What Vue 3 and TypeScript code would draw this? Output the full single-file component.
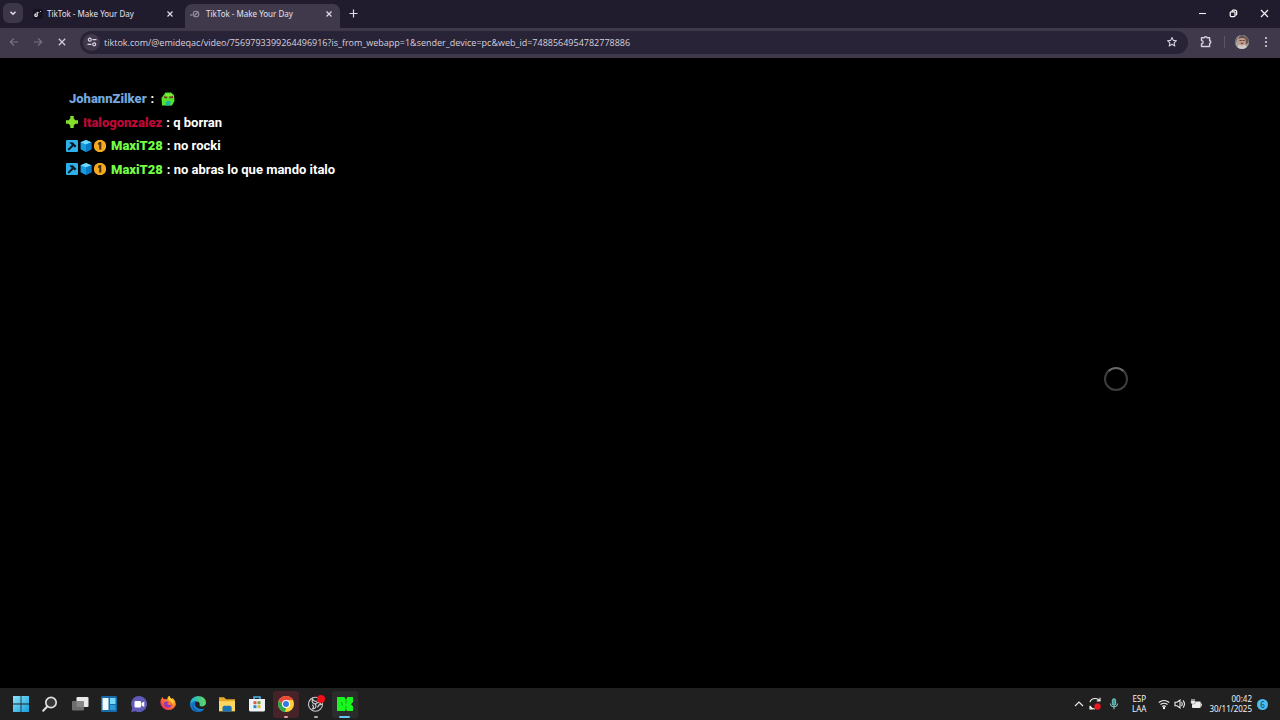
<script setup lang="ts">
import { ref } from 'vue'

interface Message {
  id: number
  user: string
  color: string
  badges: string[]
  text: string
}

const address = ref(
  'tiktok.com/@emideqac/video/7569793399264496916?is_from_webapp=1&sender_device=pc&web_id=7488564954782778886'
)

const tabs = [
  { id: 1, title: 'TikTok - Make Your Day', active: false },
  { id: 2, title: 'TikTok - Make Your Day', active: true }
]

const messages: Message[] = [
  { id: 1, user: 'JohannZilker', color: '#72a6dc', badges: [], text: '' },
  { id: 2, user: 'Italogonzalez', color: '#bc0838', badges: ['plus'], text: 'q borran' },
  { id: 3, user: 'MaxiT28', color: '#75fd46', badges: ['hammer', 'cube', 'coin'], text: 'no rocki' },
  { id: 4, user: 'MaxiT28', color: '#75fd46', badges: ['hammer', 'cube', 'coin'], text: 'no abras lo que mando italo' }
]
</script>

<template>
  <div class="screen">
    <header class="tabstrip">
      <button class="tab-search" aria-label="Search tabs">
        <svg width="8" height="8" viewBox="0 0 8 8"><path d="M1.5 2.8 4 5.2 6.5 2.8" fill="none" stroke="#e4dfec" stroke-width="1.5" /></svg>
      </button>
      <nav class="tabs">
        <div v-for="tab in tabs" :key="tab.id" class="tab" :class="{ active: tab.active }">
          <svg v-if="!tab.active" class="favicon" viewBox="0 0 10 10">
            <rect width="10" height="10" rx="2" fill="#16121f" />
            <path d="M4.2 3v3.2a1.2 1.2 0 1 1-1.2-1.2" fill="none" stroke="#e8e6ee" stroke-width="1.3" />
            <path d="M4.3 3.2q1 .6 1.8.3M7 2.5h1" fill="none" stroke="#b9b0cb" stroke-width="1" />
          </svg>
          <svg v-else class="favicon" viewBox="0 0 10 10">
            <circle cx="6" cy="5" r="2.8" fill="none" stroke="#96909f" stroke-width="1.1" />
            <path d="M0 6h2.4M4.6 6.4l3-3" fill="none" stroke="#aaa4b2" stroke-width="1.1" />
          </svg>
          <a href="#" class="tab-title">{{ tab.title }}</a>
          <button class="tab-close" aria-label="Close tab">
            <svg width="8" height="8" viewBox="0 0 8 8"><path d="m1.5 1.5 5 5m0-5-5 5" stroke="#e1dce8" stroke-width="1.2" /></svg>
          </button>
        </div>
      </nav>
      <button class="new-tab" aria-label="New tab">
        <svg width="9" height="9" viewBox="0 0 9 9"><path d="M4.5.5v8m-4-4h8" stroke="#e1dce8" stroke-width="1.2" /></svg>
      </button>
      <div class="window-controls">
        <button aria-label="Minimize"><svg width="9" height="9" viewBox="0 0 9 9"><path d="M1 4.5h7" stroke="#eee" stroke-width="1.1" /></svg></button>
        <button aria-label="Restore">
          <svg width="9" height="9" viewBox="0 0 9 9" fill="none" stroke="#fff" stroke-width="1.2"><rect x="1.2" y="2.8" width="4.8" height="4.8" rx="1" /><path d="M3 2.5Q3 1.2 4.2 1.2h1.6q1.9 0 1.9 1.9v1.8q0 1.1-1.3 1.1" /></svg>
        </button>
        <button aria-label="Close"><svg width="9" height="9" viewBox="0 0 9 9"><path d="m1 1 7 7m0-7L1 8" stroke="#f2f0f5" stroke-width="1.2" /></svg></button>
      </div>
    </header>

    <div class="toolbar">
      <div class="nav">
        <button aria-label="Back"><svg width="10" height="10" viewBox="0 0 10 10"><path d="M9 5H1.5M5 1.3 1.3 5 5 8.7" fill="none" stroke="#79718a" stroke-width="1.2" /></svg></button>
        <button aria-label="Forward"><svg width="10" height="10" viewBox="0 0 10 10"><path d="M1 5h7.5M5 1.3 8.7 5 5 8.7" fill="none" stroke="#79718a" stroke-width="1.2" /></svg></button>
        <button aria-label="Stop loading"><svg width="10" height="10" viewBox="0 0 10 10"><path d="m1.8 1.8 6.4 6.4m0-6.4L1.8 8.2" stroke="#d0cad9" stroke-width="1.3" /></svg></button>
      </div>
      <div class="omnibox">
        <button class="site-info" aria-label="View site information">
          <svg width="10" height="10" viewBox="0 0 10 10" fill="none" stroke="#dcd6e6" stroke-width="1.2"><path d="M5.5 2.7h4M.5 7.3h4" /><circle cx="2.8" cy="2.7" r="1.5" /><circle cx="7.2" cy="7.3" r="1.5" /></svg>
        </button>
        <input v-model="address" class="address" type="text" aria-label="Address" spellcheck="false" />
        <button class="star" aria-label="Bookmark this tab">
          <svg width="12" height="12" viewBox="0 0 12 12"><path d="m6 1.5 1.3 2.9 3.2.3-2.4 2.1.7 3.2L6 8.3 3.2 10l.7-3.2-2.4-2.1 3.2-.3z" fill="none" stroke="#d5cfde" stroke-width="1.1" stroke-linejoin="round" /></svg>
        </button>
      </div>
      <div class="tools">
        <button aria-label="Extensions">
          <svg width="12" height="12" viewBox="0 0 12 12"><path d="M1.5 1.8h2.7a1.4 1 0 0 1 2.8 0h2.6v2.9a1.2 1.4 0 0 1 0 2.8v3H1.5V7.8a1.6 1.6 0 0 0 0-3.2z" fill="none" stroke="#d5cfde" stroke-width="1.4" stroke-linejoin="round" /></svg>
        </button>
        <span class="divider"></span>
        <button aria-label="Profile">
          <svg width="16" height="16" viewBox="0 0 16 16">
            <circle cx="8" cy="8" r="7" fill="#aaa39f" />
            <path d="M1.6 10.5Q2 6 4.5 2.5L3 4Q1 6 1.6 10.5M11 2q3.5 2 3.8 6L12 11z" fill="#655354" />
            <path d="M3 13q2-3 5-3t5 3q-2 2-5 2t-5-2" fill="#d2c9c7" />
            <ellipse cx="8" cy="7" rx="3.3" ry="4.6" fill="#c69c86" />
            <path d="M4.5 5Q5 1.3 8 1.3T11.5 5Q8 3 4.5 5" fill="#60504e" />
            <path d="M5.5 6.5h2m1 0h2M6.8 9.3h2.5" stroke="#51363a" />
          </svg>
        </button>
        <button aria-label="Menu"><svg width="4" height="12" viewBox="0 0 4 12" fill="#d5cfde"><circle cx="2" cy="2" r="1.1" /><circle cx="2" cy="6" r="1.1" /><circle cx="2" cy="10" r="1.1" /></svg></button>
      </div>
    </div>

    <main class="page">
      <ul class="chat">
        <li v-for="message in messages" :key="message.id">
          <span v-if="message.badges.length" class="badges">
            <template v-for="badge in message.badges" :key="badge">
              <svg v-if="badge === 'plus'" viewBox="0 0 12 12"><path d="M4.3 0h3.4v2.6l1.7 1.7H12v3.4H9.4L7.7 9.4V12H4.3V9.4L2.6 7.7H0V4.3h2.6l1.7-1.7z" fill="#83df27" /></svg>
              <svg v-else-if="badge === 'hammer'" viewBox="0 0 12 12"><rect width="12" height="12" rx="1" fill="#2eb0ea" /><path d="m3.2 2.4 3.5-.2 3.8 3.9-1.7 1.5-1.3-1.4L3 10.5 1.6 9.2 5.8 4.9z" fill="#061b28" /></svg>
              <svg v-else-if="badge === 'cube'" viewBox="0 0 12 12"><path d="m6 0 5.4 2.2v7L6 12 .6 9.2v-7z" fill="#159be4" /><path d="M.6 2.2 6 0l5.4 2.2L6 4.6z" fill="#6bdcff" /><path d="M6 4.6 11.4 2.2v7L6 12z" fill="#087ac1" /></svg>
              <svg v-else viewBox="0 0 12 12"><path d="M4 0h4l3 2 1 2.5v3L11 10l-3 2H4l-3-2-1-2.5v-3L1 2z" fill="#f4aa20" /><path d="M4 3.3 5.3 2h2v7.5H5.2V4.8H4z" fill="#50300a" /></svg>
            </template>
          </span>
          <b class="user" :class="{ plain: !message.badges.length }" :style="{ color: message.color }">{{ message.user }}</b>
          <span class="body">: {{ message.text }}</span>
          <svg v-if="!message.text" class="emote" viewBox="0 0 14 14">
            <path d="M4.5.5H10L13 3l.5 6-2.5 4.5H1L.5 6z" fill="#54e52b" />
            <path d="M3 4.2 6.5 4.8 6 6.5 3 6M8 4.8l4-.8V6L8.5 6.5z" fill="#873824" />
            <path d="M5 9.8q3-2 5 0l-1 3.7H4z" fill="#22b59c" />
            <path d="M5 3h6" stroke="#b6ef4c" />
          </svg>
        </li>
      </ul>
      <div class="spinner" role="status" aria-label="Loading"></div>
    </main>

    <footer class="taskbar">
      <nav class="apps">
        <button aria-label="Start">
          <svg viewBox="0 0 18 18"><defs><linearGradient id="win" x2="1" y2="1"><stop stop-color="#8be5fc" /><stop offset="1" stop-color="#159ddb" /></linearGradient></defs><path d="M1 1h7.6v7.6H1zM9.4 1H17v7.6H9.4zM1 9.4h7.6V17H1zM9.4 9.4H17V17H9.4z" fill="url(#win)" /></svg>
        </button>
        <button aria-label="Search">
          <svg viewBox="0 0 18 18"><circle cx="10" cy="7.5" r="5.2" fill="#343638" stroke="#dedede" stroke-width="1.7" /><path d="m6.2 11.5-4 4.3" stroke="#dedede" stroke-width="2" stroke-linecap="round" /></svg>
        </button>
        <button aria-label="Task view">
          <svg viewBox="0 0 18 18"><rect x="5.5" y="2" width="12" height="10" rx="1" fill="#e8e8e8" /><rect x="1" y="6" width="12" height="9.5" rx="1" fill="#777" fill-opacity=".88" /></svg>
        </button>
        <button aria-label="Widgets">
          <svg viewBox="0 0 18 18"><rect x="1" y="1" width="16" height="16" rx="1.5" fill="#166ca9" /><rect x="2.5" y="3" width="6" height="12" fill="#f1faff" /><rect x="10" y="3" width="5.5" height="6" fill="#77d8fb" /><rect x="10" y="10" width="5.5" height="5" fill="#2f9bd6" /></svg>
        </button>
        <button aria-label="Chat">
          <svg viewBox="0 0 18 18"><path d="M9 1a8 8 0 1 1-3.4 15.2L1.2 17l1-4A8 8 0 0 1 9 1" fill="#625ab8" /><rect x="4.5" y="6" width="6.5" height="6.5" rx="1" fill="#fff" /><path d="m11.5 8 2.8-1.6v5.7l-2.8-1.6z" fill="#fff" /></svg>
        </button>
        <button aria-label="Firefox">
          <svg viewBox="0 0 18 18"><defs><linearGradient id="fox" x1="1" x2=".1" y2="1"><stop stop-color="#ffe13b" /><stop offset=".45" stop-color="#ff802b" /><stop offset="1" stop-color="#ed1d67" /></linearGradient></defs><path d="M2 4.2 3.5 2l1.4 2.2q2-.5 3.2.2Q8.2 2 10.2.8q.6 2.1 2.5 3.3L13.8 3q3.3 3.2 3 7A7.9 7.9 0 1 1 2 4.2" fill="url(#fox)" /><path d="M5 8q.6-2 3-1.5l1.8 1-1.7 1.3q1 2 4.7.6-1 3.5-4.3 3.2T5 8" fill="#8e39ba" /><path d="M10.2.8q.6 2.1 2.5 3.3 2.5 2.2 1.4 5.7-.6-3-3-4Q8 4.5 10.2.8" fill="#ffd53c" /></svg>
        </button>
        <button aria-label="Edge">
          <svg viewBox="0 0 18 18"><defs><linearGradient id="edge" x2="1"><stop stop-color="#16b4df" /><stop offset="1" stop-color="#67d65c" /></linearGradient></defs><path d="M1 9.5A8 8 0 0 1 9 1q7.5.2 8 6.6-.1 3.8-4 3.8-3.1 0-2.3-1.9.2-3-3.2-3-4.1-.1-6.5 3" fill="url(#edge)" /><path d="M1 9.5q2.6-4 6.3-3.7-2.6 3.2 0 6.2 3 3 8.3 1.5-2.7 4-7.3 3.5Q1.3 16 1 9.5" fill="#147dce" /><path d="M6.6 7Q3 10 5.5 13.5q3 3.2 7 3-9 2-9-5.5 0-3 3.1-4" fill="#155ca6" /></svg>
        </button>
        <button aria-label="File Explorer">
          <svg viewBox="0 0 18 18"><path d="M1 2.3h5l2 2h9v12H1z" fill="#e5aa28" /><path d="M1 6.2h16v10H1z" fill="#ffd760" /><path d="M4.5 16.5V12l1.5-1.3h6.2l1.5 1.3v4.5z" fill="#1674b7" /></svg>
        </button>
        <button aria-label="Microsoft Store">
          <svg viewBox="0 0 18 18"><path d="M6 4V2h6v2" fill="none" stroke="#50b5e7" stroke-width="1.5" /><path d="M1 4h16v11q0 1.5-1.5 1.5h-13Q1 16.5 1 15z" fill="#f0f3f5" /><path d="M5.5 6.2h3v3h-3z" fill="#dd5a45" /><path d="M9.5 6.2h3v3h-3z" fill="#68a838" /><path d="M5.5 10.2h3v3h-3z" fill="#248dc6" /><path d="M9.5 10.2h3v3h-3z" fill="#e5b52d" /></svg>
        </button>
        <button class="running alert" aria-label="Chrome">
          <svg viewBox="0 0 18 18"><circle cx="9" cy="9" r="8" fill="#ffd139" /><path d="M2.1 5A8 8 0 0 1 16 5H9v4L5.6 11z" fill="#eb493b" /><path d="M2.1 5 5.6 11 9 13l-1 4A8 8 0 0 1 2.1 5" fill="#29a853" /><circle cx="9" cy="9" r="4" fill="#fff" /><circle cx="9" cy="9" r="3" fill="#3479e4" /></svg>
        </button>
        <button class="running" aria-label="OBS Studio">
          <svg viewBox="0 0 18 18"><circle cx="8.5" cy="9.2" r="7" fill="#202124" stroke="#c9c9c9" stroke-width="1.1" /><path d="M8.5 9.2Q4 8.5 5.5 4q1 3 4.3 2.3M8.5 9.2q2.8-3.7 5.7.2-3-.2-3.5 3.1M8.5 9.2q1.8 4.2-3 4.7 2.2-2.2-.3-4.1" fill="none" stroke="#c9c9c9" stroke-width="1.2" /><circle cx="14" cy="4" r="4" fill="#ef1018" /></svg>
        </button>
        <button class="running current" aria-label="Kick">
          <svg viewBox="0 0 18 18"><path d="M1 2h7.5l1.5 3 1.3-3H17v5l-2 2.2 2 2V16h-6l-1.5-2.5V16H1z" fill="#19f51e" /><path d="m5.5 7 1 3.5M10 5v3.5m0 2.5v2.5" stroke="#0b8f10" stroke-width=".8" /></svg>
        </button>
      </nav>
      <div class="tray">
        <button aria-label="Show hidden icons"><svg width="10" height="10" viewBox="0 0 10 10"><path d="m1 7 4-4 4 4" fill="none" stroke="#eee" stroke-width="1.1" /></svg></button>
        <button aria-label="Updates"><svg width="14" height="14" viewBox="0 0 14 14"><path d="M2 5q1.2-3.5 5-3.5 3.2 0 4.5 2M12 .8v3H8.8M2 8.8v3h3M2 9q1.5 3 5 3" fill="none" stroke="#eee" stroke-width="1.2" /><circle cx="9.5" cy="9.5" r="3.2" fill="#ef1721" /></svg></button>
        <button aria-label="Microphone"><svg width="10" height="12" viewBox="0 0 10 12"><rect x="3.3" y=".7" width="3.4" height="6.6" rx="1.7" fill="#3f9e9c" stroke="#8ed5d0" stroke-width=".8" /><path d="M1.3 5.5q0 3.3 3.7 3.3t3.7-3.3M5 8.8v2.5" fill="none" stroke="#8ed5d0" /></svg></button>
        <button class="language">ESP<br />LAA</button>
        <button class="status" aria-label="Network, sound and battery">
          <svg width="12" height="12" viewBox="0 0 12 12" fill="none" stroke="#eee" stroke-width="1.2"><path d="M.8 4.5q5.2-4 10.4 0M2.5 6.6q3.5-2.7 7 0M4.2 8.5q1.8-1.4 3.6 0" /><circle cx="6" cy="10" r=".6" fill="#eee" /></svg>
          <svg width="12" height="12" viewBox="0 0 12 12" fill="none" stroke="#eee" stroke-width="1.1"><path d="M1 4.3h2L6 2v8L3 7.7H1zM7.5 4q1.5 2 0 4M9 2.3q3 3.7 0 7.4" /></svg>
          <svg width="12" height="12" viewBox="0 0 12 12"><rect x="2" y="3.5" width="8.7" height="6.5" rx="1" fill="#eee" /><path d="M11.3 5.5v2.7M2 1v2m2-2v2" stroke="#eee" stroke-width="1.1" /><path d="M.8 2.5h4.4v2.7q-2.2 2.2-4.4 0z" fill="#eee" stroke="#202020" stroke-width=".3" /></svg>
        </button>
        <button class="clock">00:42<br />30/11/2025</button>
        <button class="notifications" aria-label="6 notifications">6</button>
      </div>
    </footer>
  </div>
</template>

<style>
body {
  background: #000;
}
</style>

<style scoped>
* {
  box-sizing: border-box;
}

.screen {
  min-height: 100vh;
  display: flex;
  flex-direction: column;
  background: #000;
  font-family: "Noto Sans", sans-serif;
  font-size: 8px;
}

button {
  display: flex;
  align-items: center;
  justify-content: center;
  padding: 0;
  border: 0;
  background: none;
  color: inherit;
  font: inherit;
}

.tabstrip {
  display: flex;
  align-items: center;
  height: 28px;
  padding: 0 0 2px 3px;
  background: #211c2d;
}

.tab-search {
  width: 20px;
  height: 20px;
  border-radius: 6px;
  background: #3c3648;
}

.tabs {
  display: flex;
  align-self: flex-end;
  margin: 0 0 -2px 3px;
}

.tab {
  display: flex;
  align-items: center;
  width: 155px;
  height: 24px;
  padding: 0 6px 5px 5px;
  color: #e6e2ec;
}

.tab:first-child {
  width: 159px;
  padding-left: 7px;
  padding-right: 10px;
}

.tab.active {
  border-radius: 7px 7px 0 0;
  background: #3f394b;
}

.favicon {
  width: 10px;
  height: 10px;
  margin-right: 4px;
}

.tab.active .favicon {
  margin-right: 6px;
}

.tab-title {
  flex: 1;
  color: inherit;
  text-decoration: none;
  white-space: nowrap;
}

.tab-close {
  width: 10px;
  height: 10px;
}

.new-tab {
  width: 20px;
  height: 20px;
  margin-left: 3px;
}

.window-controls {
  display: flex;
  margin-left: auto;
}

.window-controls button {
  width: 31px;
  height: 26px;
}

.toolbar {
  display: flex;
  align-items: center;
  height: 30px;
  padding: 0 6px 2px 2px;
  background: #3f394b;
}

.nav {
  display: flex;
}

.nav button {
  width: 24px;
  height: 24px;
}

.omnibox {
  display: flex;
  flex: 1;
  align-items: center;
  height: 23px;
  margin-left: 6px;
  padding: 0 10px 0 3px;
  border-radius: 12px;
  background: #292337;
}

.site-info {
  width: 17px;
  height: 17px;
  border-radius: 50%;
  background: #3f394b;
}

.address {
  flex: 1;
  min-width: 0;
  margin-left: 4px;
  padding: 0;
  border: 0;
  outline: 0;
  background: none;
  color: #d6d1dd;
  font-family: "Open Sans", "Noto Sans", sans-serif;
  font-size: 9px;
}

.tools {
  display: flex;
  align-items: center;
  margin-left: 12px;
}

.divider {
  width: 1px;
  height: 12px;
  margin: 0 9px 0 12px;
  background: #5c536a;
}

.tools button:last-child {
  width: 16px;
  height: 16px;
  margin-left: 8px;
}

.page {
  flex: 1;
  display: flex;
  justify-content: space-between;
  padding: 29px 152px 18px 66px;
  background: #000;
}

.chat {
  display: grid;
  grid-auto-rows: 1fr;
  height: 94px;
  margin: 0;
  padding: 0;
  list-style: none;
  color: #fff;
  font: bold 13px/23px Roboto, sans-serif;
}

.chat li {
  display: flex;
  align-items: center;
}

.badges {
  display: flex;
  gap: 2px;
  margin-right: 5px;
}

.badges svg {
  width: 12px;
  height: 12px;
}

.user.plain {
  margin-left: 3px;
}

.body {
  margin-left: 4px;
  white-space: pre;
}

.emote {
  width: 14px;
  height: 14px;
  margin-left: 3px;
}

.spinner {
  align-self: center;
  width: 24px;
  height: 24px;
  border: 2px solid #3d3d3d;
  border-top-color: #696969;
  border-radius: 50%;
}

.taskbar {
  display: flex;
  align-items: center;
  justify-content: space-between;
  height: 32px;
  padding: 0 12px 0 8px;
  background: #202020;
  color: #f2f2f2;
}

.apps {
  display: flex;
  justify-content: space-between;
  width: 350px;
}

.apps button {
  position: relative;
  width: 26px;
  height: 27px;
  border-radius: 3px;
}

.apps svg {
  width: 18px;
  height: 18px;
}

.apps .alert {
  background: #452328;
}

.apps .current {
  background: #2b2d2d;
}

.running::after {
  position: absolute;
  bottom: 0;
  width: 4px;
  height: 2px;
  border-radius: 1px;
  background: #aaa;
  content: "";
}

.alert::after {
  background: #d9a2a5;
}

.current::after {
  width: 11px;
  background: #63c6f1;
}

.tray {
  display: flex;
  align-items: center;
}

.tray > button:nth-child(2) {
  margin-left: 4px;
}

.tray > button:nth-child(3) {
  margin-left: 7px;
}

.language {
  margin-left: 13px;
  line-height: 10px;
}

.status {
  gap: 4px;
  margin-left: 12px;
}

.clock {
  margin-left: 7px;
  line-height: 10px;
  text-align: right;
}

.notifications {
  width: 11px;
  height: 11px;
  margin-left: 5px;
  border-radius: 50%;
  background: #4dbdf0;
  color: #143c50;
}
</style>
